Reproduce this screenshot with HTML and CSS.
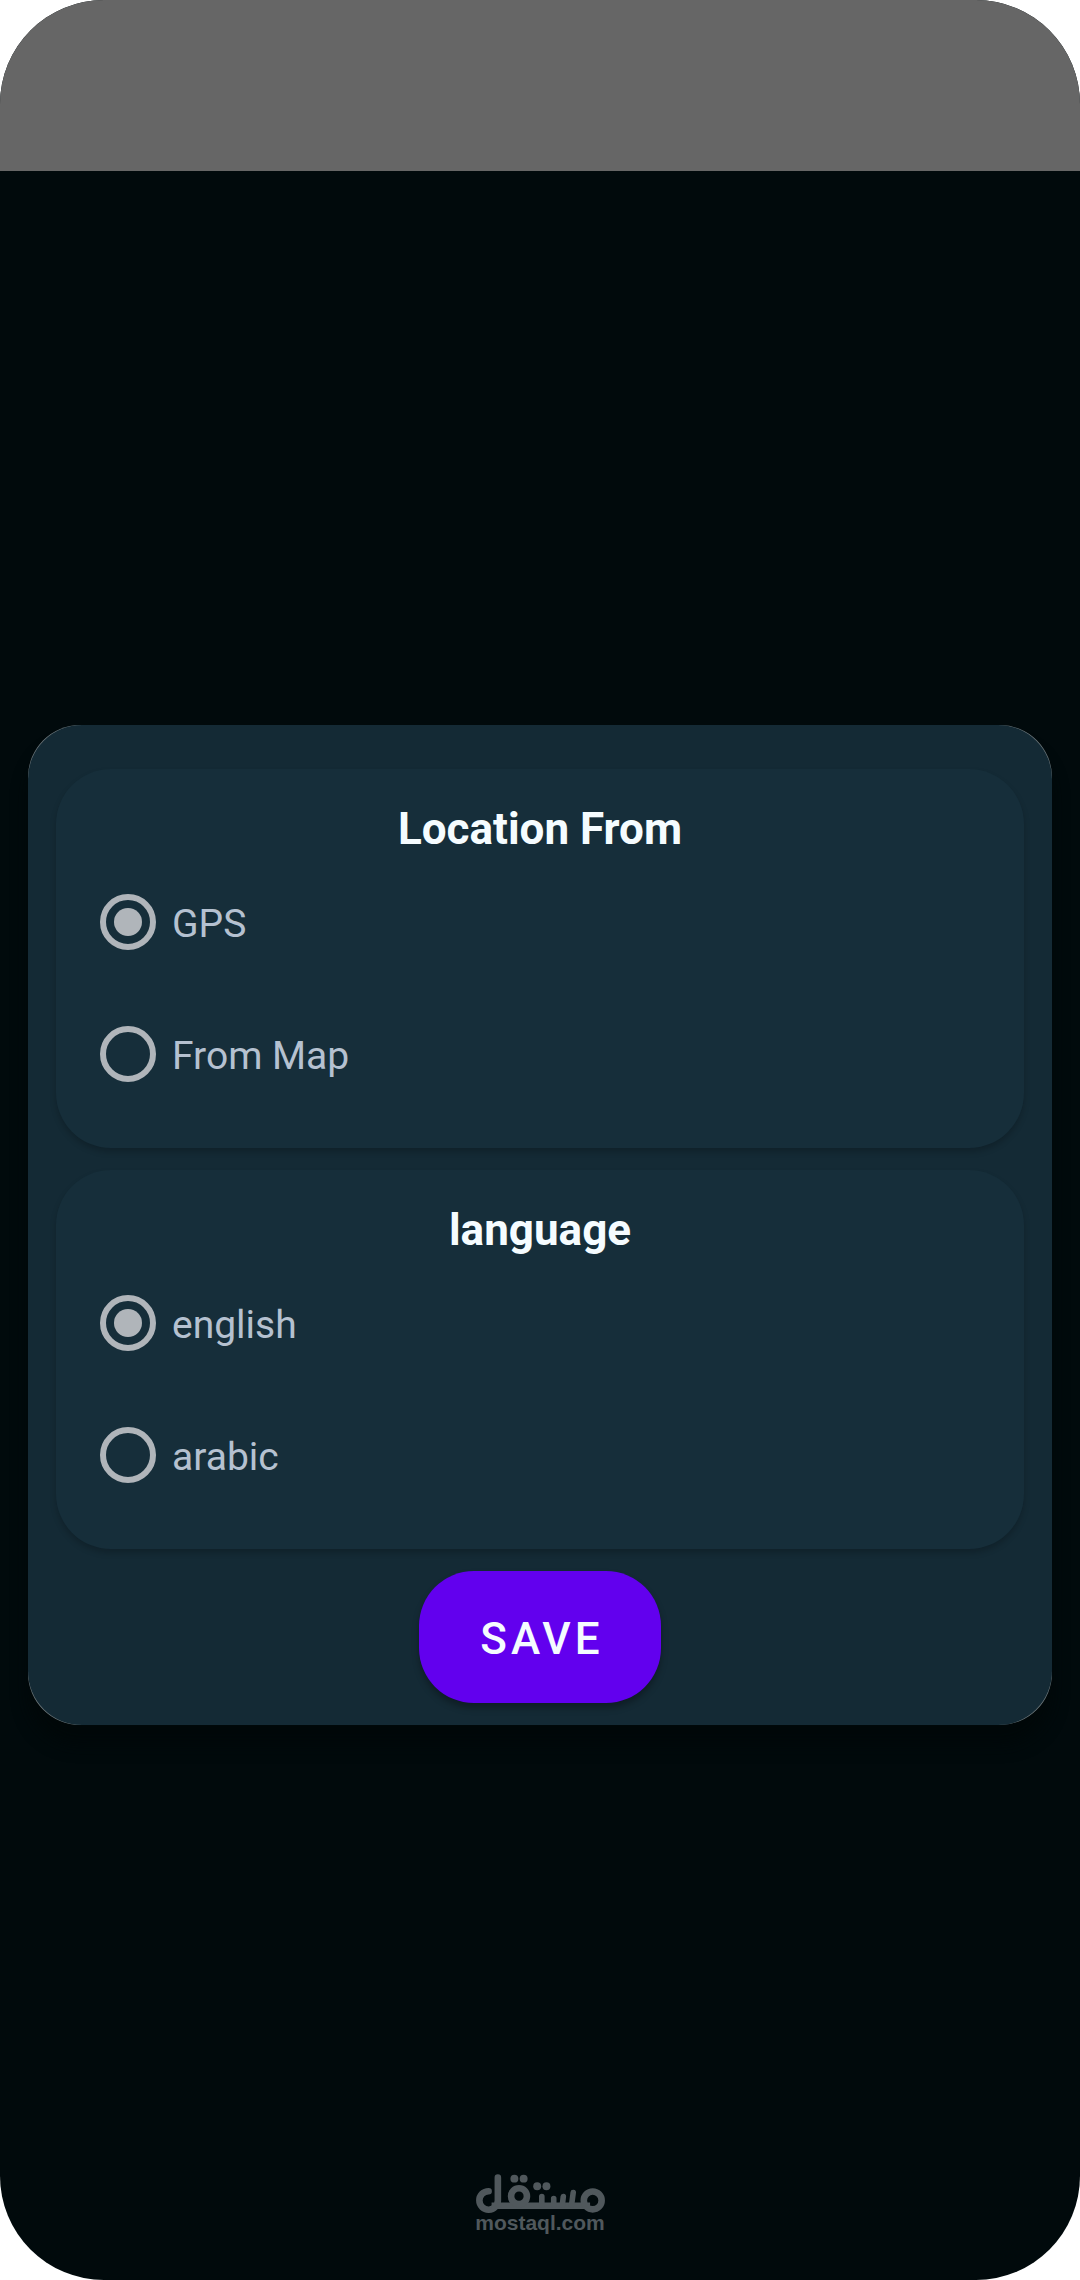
FILE: index.html
```html
<!DOCTYPE html>
<html lang="en">
<head>
  <meta charset="utf-8">
  <meta name="viewport" content="width=device-width, initial-scale=1">
  <title>Settings</title>
  <link rel="stylesheet" href="styles.css">
</head>
<body>
  <div class="screen">
    <header class="status-area"></header>
    <main class="backdrop">
      <div class="dialog">
        <form class="settings">
          <section class="card" role="radiogroup" aria-labelledby="location-title">
            <h2 class="card-title" id="location-title">Location From</h2>
            <label class="option"><input class="radio" type="radio" name="location" value="gps" checked><span class="option-text">GPS</span></label>
            <label class="option"><input class="radio" type="radio" name="location" value="map"><span class="option-text">From Map</span></label>
          </section>
          <section class="card" role="radiogroup" aria-labelledby="language-title">
            <h2 class="card-title" id="language-title">language</h2>
            <label class="option"><input class="radio" type="radio" name="language" value="en" checked><span class="option-text">english</span></label>
            <label class="option"><input class="radio" type="radio" name="language" value="ar"><span class="option-text">arabic</span></label>
          </section>
          <button class="save" type="button">SAVE</button>
        </form>
      </div>
    </main>
    <div class="watermark">
      <svg class="watermark-logo" viewBox="104 70 392 118" role="img" aria-label="مستقل">
        <g fill="none" stroke="currentColor" stroke-width="20" stroke-linecap="round">
          <path d="M143 122A28 28 0 1 0 171 149V81"/>
          <path d="M152 166H450" stroke-linecap="butt"/>
          <circle cx="235" cy="137" r="24"/>
          <path d="M304 138V164M340 144V164M369 138L366 164M399 126L394 164" stroke-width="17"/>
          <circle cx="458" cy="150" r="27"/>
        </g>
        <g fill="currentColor">
          <circle cx="221" cy="84" r="12"/>
          <circle cx="249" cy="84" r="12"/>
          <circle cx="290" cy="107" r="12"/>
          <circle cx="318" cy="107" r="12"/>
        </g>
      </svg>
      <span class="watermark-text">mostaql.com</span>
    </div>
  </div>
</body>
</html>
```
FILE: styles.css
```css
* {
  box-sizing: border-box;
}

body {
  margin: 0;
  background: #fff;
  font-family: Roboto, "Noto Sans", sans-serif;
}

.screen {
  position: relative;
  display: flex;
  flex-direction: column;
  min-height: 100vh;
  overflow: hidden;
  border-radius: 104px;
  background: #010a0c;
}

.status-area {
  height: 171px;
  background: #666;
}

.backdrop {
  flex: 1;
  display: flex;
  flex-direction: column;
  justify-content: center;
  padding: 28px 28px 30px;
}

/* The lighter base shows as a hairline round the corners of the panel. */
.dialog {
  border-radius: 52px;
  background: #6f7a7e;
  box-shadow: 0 20px 16px #000809;
}

.settings {
  display: flex;
  flex-direction: column;
  gap: 22px;
  padding: 44px 28px 22px;
  border-radius: 54px;
  background: #142a35;
}

.card {
  padding: 34px 44px 28px;
  border-radius: 55px;
  background: #162e3a;
  box-shadow: 0 4px 6px rgba(0, 0, 0, 0.2);
}

.card-title {
  margin: 0;
  color: #f5fcff;
  font-size: 44px;
  font-weight: 700;
  line-height: 53px;
  text-align: center;
}

.option {
  display: flex;
  align-items: center;
  gap: 16px;
  height: 132px;
  color: #b5c1d0;
  font-size: 39px;
  line-height: 46px;
}

.option-text {
  padding-top: 4px;
}

.radio {
  appearance: none;
  display: grid;
  place-items: center;
  width: 56px;
  height: 56px;
  margin: 0;
  border: 6px solid #b0b5ba;
  border-radius: 50%;
}

.radio:checked::before {
  content: "";
  width: 28px;
  height: 28px;
  border-radius: 50%;
  background: #b0b5ba;
}

.save {
  align-self: center;
  min-width: 242px;
  height: 132px;
  padding: 4px 42px 0 46px;
  border: 0;
  border-radius: 55px;
  background: #6200ee;
  color: #f5fcff;
  box-shadow: 0 5px 7px rgba(0, 0, 0, 0.3);
  font-family: inherit;
  font-size: 44px;
  font-weight: 500;
  letter-spacing: 4px;
}

.watermark {
  position: absolute;
  right: 0;
  bottom: 48px;
  left: 0;
  display: flex;
  flex-direction: column;
  align-items: center;
  color: #50585c;
}

.watermark-logo {
  width: 131px;
  height: 39px;
}

.watermark-text {
  font-family: "Liberation Sans", Arial, sans-serif;
  font-size: 21px;
  font-weight: 700;
  line-height: 19px;
}
```
